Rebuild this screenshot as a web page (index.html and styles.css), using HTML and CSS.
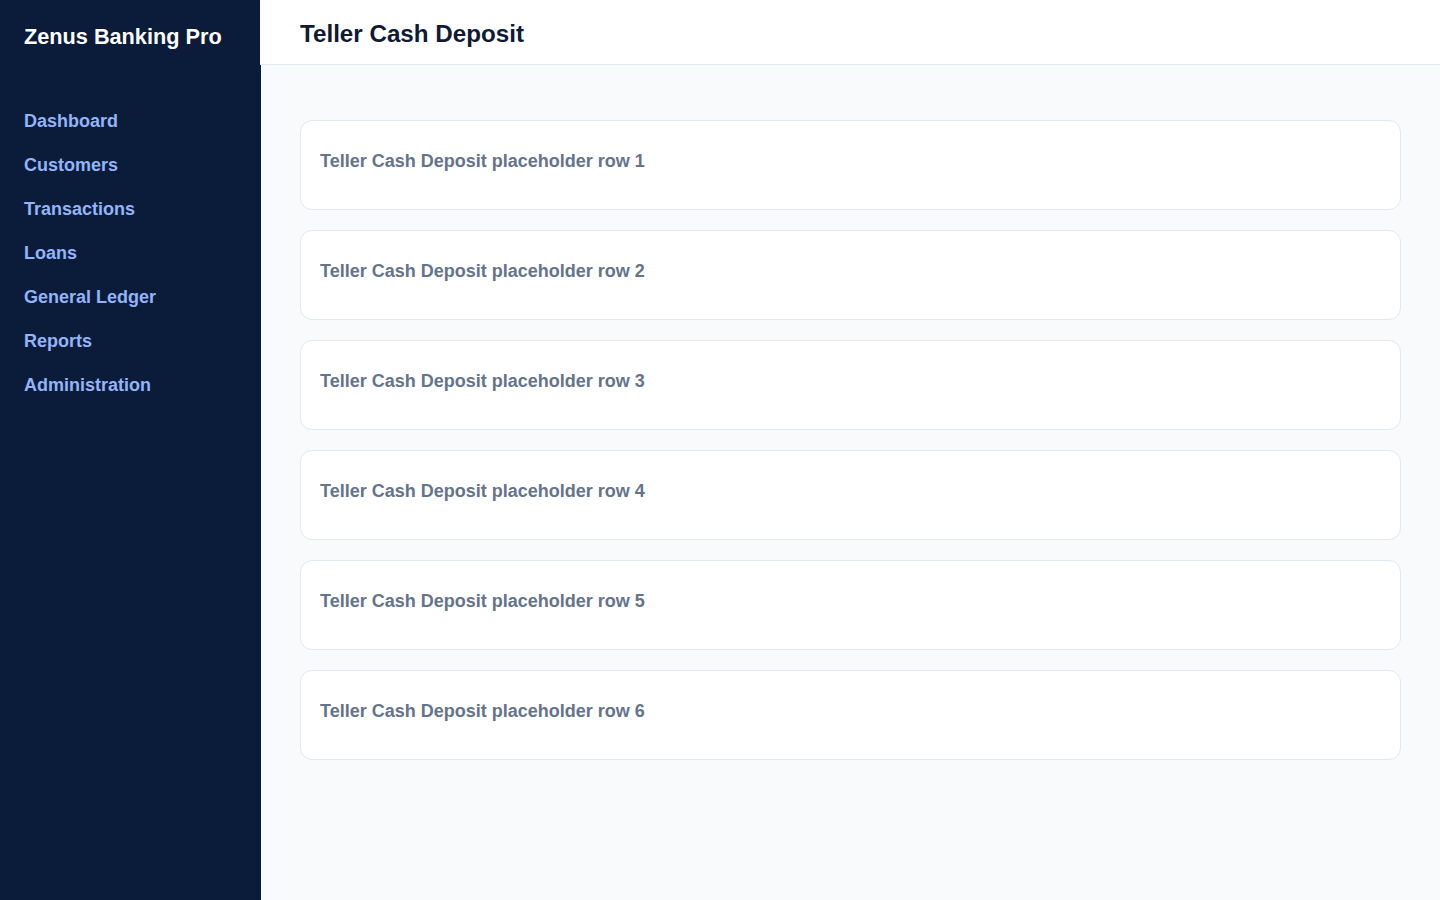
FILE: index.html
```html
<!DOCTYPE html>
<html lang="en">
<head>
<meta charset="utf-8">
<title>Teller Cash Deposit</title>
<link rel="stylesheet" href="styles.css">
</head>
<body>
<div class="app">
  <aside class="sidebar">
    <div class="brand">Zenus Banking Pro</div>
    <nav class="nav">
      <a class="nav-item" href="#">Dashboard</a>
      <a class="nav-item" href="#">Customers</a>
      <a class="nav-item" href="#">Transactions</a>
      <a class="nav-item" href="#">Loans</a>
      <a class="nav-item" href="#">General Ledger</a>
      <a class="nav-item" href="#">Reports</a>
      <a class="nav-item" href="#">Administration</a>
    </nav>
  </aside>
  <div class="main">
    <header class="topbar">
      <h1 class="page-title">Teller Cash Deposit</h1>
    </header>
    <section class="content">
      <div class="card">Teller Cash Deposit placeholder row 1</div>
      <div class="card">Teller Cash Deposit placeholder row 2</div>
      <div class="card">Teller Cash Deposit placeholder row 3</div>
      <div class="card">Teller Cash Deposit placeholder row 4</div>
      <div class="card">Teller Cash Deposit placeholder row 5</div>
      <div class="card">Teller Cash Deposit placeholder row 6</div>
    </section>
  </div>
</div>
</body>
</html>
```

FILE: styles.css
```css
* { box-sizing: border-box; }
html, body { margin: 0; padding: 0; height: 100%; }
body {
  font-family: "Liberation Sans", Arial, Helvetica, sans-serif;
  background: #f8fafc;
}
.app {
  display: flex;
  min-height: 100vh;
}
.sidebar {
  width: 261px;
  flex: 0 0 261px;
  background: #0b1c3b;
  color: #ffffff;
}
.brand {
  padding: 24px 24px 0;
  font-size: 21.7px;
  font-weight: 700;
  line-height: 25px;
  color: #ffffff;
}
.nav {
  display: flex;
  flex-direction: column;
  padding-top: 50px;
}
.nav-item {
  display: block;
  padding: 10px 24px;
  line-height: 24px;
  font-size: 18px;
  font-weight: 700;
  color: #93b4f7;
  text-decoration: none;
}
.main {
  flex: 1;
  display: flex;
  flex-direction: column;
  margin-left: -1px;
  min-width: 0;
}
.topbar {
  height: 65px;
  background: #ffffff;
  border-bottom: 1px solid #e2e8f0;
  display: flex;
  align-items: center;
  padding: 0 40px;
}
.page-title {
  margin: 0;
  font-size: 24.2px;
  font-weight: 700;
  color: #0f1a36;
  line-height: 28px;
  padding-top: 4px;
}
.content {
  padding: 55px 39px 40px 40px;
  display: flex;
  flex-direction: column;
  gap: 20px;
}
.card {
  height: 90px;
  background: #ffffff;
  border: 1px solid #e2e8f0;
  border-radius: 12px;
  padding: 30px 19px 0;
  font-size: 18px;
  font-weight: 700;
  line-height: normal;
  color: #64748b;
}
```
